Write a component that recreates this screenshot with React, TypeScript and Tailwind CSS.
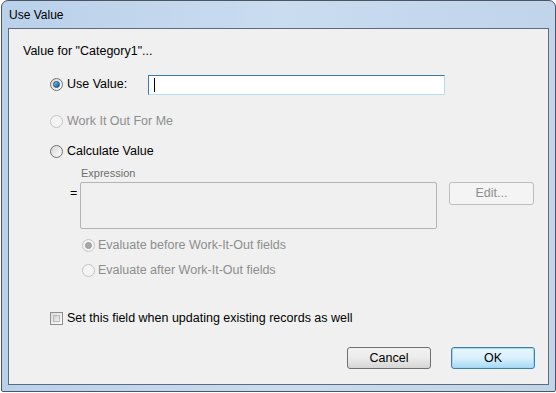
import React from 'react';

const font = { fontFamily: 'Tahoma, "Liberation Sans", Arial, sans-serif' };

const Radio = ({ checked = false, disabled = false }: { checked?: boolean; disabled?: boolean }) => (
  <span
    className={`relative inline-flex w-[13px] h-[13px] shrink-0 items-center justify-center rounded-full border ${
      disabled ? 'border-[#c4c4c4] bg-[#f4f4f4]' : 'border-[#6f6f6f] bg-gradient-to-br from-[#d6d6d6] to-[#fcfcfc]'
    }`}
  >
    {checked && (
      <span
        className={`w-[7px] h-[7px] rounded-full ${
          disabled ? 'bg-[#a8a8a8] border border-[#9a9a9a]' : 'bg-gradient-to-br from-[#7fd0f5] to-[#0d4f86] border border-[#1c4f7c]'
        }`}
      />
    )}
  </span>
);

const App = () => {
  return (
    <div className="w-[556px] h-[393px] bg-white text-[12.5px] text-black" style={font}>
      <div className="w-[555px] h-[392px] ml-px rounded-t-[7px] rounded-b-[2px] border border-[#4a5663] bg-gradient-to-r from-[#b9d1ea] via-[#c9dcf0] to-[#c0d4ea] flex flex-col px-[6px] pb-[6px]">
        {/* title bar */}
        <div className="h-[27px] flex items-center pl-[1px] pt-[1px] text-[12px] text-black" style={{ fontFamily: '"Segoe UI", "Liberation Sans", Arial, sans-serif' }}>
          Use Value
        </div>

        {/* client area */}
        <div className="flex-1 border border-[#5e6b7b] bg-[#f0f0f0] flex flex-col pl-[14px] pr-[13px]">
          <div className="mt-[15px] h-[14px] leading-[14px]">Value for "Category1"...</div>

          <div className="mt-[17px] flex items-center pl-[27px] h-[19px]">
            <Radio checked />
            <span className="ml-[4px] w-[80px]">Use Value:</span>
            <div className="ml-[1px] w-[297px] h-[20px] border border-[#3d7bad] border-b-[#b5dcf1] border-r-[#b5dcf1] bg-white flex items-center pl-[5px]">
              <span className="w-px h-[14px] bg-black" />
            </div>
          </div>

          <div className="mt-[20px] flex items-center pl-[27px] h-[14px] text-[#8d8d8d]">
            <Radio disabled />
            <span className="ml-[4px]">Work It Out For Me</span>
          </div>

          <div className="mt-[16px] flex items-center pl-[27px] h-[14px]">
            <Radio />
            <span className="ml-[4px]">Calculate Value</span>
          </div>

          <div className="mt-[8px] pl-[58px] h-[14px] leading-[14px] text-[11px] text-[#6d6d6d]">Expression</div>

          <div className="mt-[2px] flex items-start">
            <span className="ml-[47px] mt-[2px] w-[10px]">=</span>
            <div className="w-[357px] h-[47px] border border-[#b4b4b4] rounded-[2px] bg-[#f0f0f0]" />
            <div className="ml-[12px] w-[85px] h-[23px] border border-[#bdbdbd] rounded-[3px] bg-[#f4f4f4] flex items-center justify-center text-[#8d8d8d]">
              Edit...
            </div>
          </div>

          <div className="mt-[8px] flex items-center pl-[59px] h-[16px] text-[#8d8d8d]">
            <Radio checked disabled />
            <span className="ml-[3px]">Evaluate before Work-It-Out fields</span>
          </div>

          <div className="mt-[9px] flex items-center pl-[59px] h-[16px] text-[#8d8d8d]">
            <Radio disabled />
            <span className="ml-[3px]">Evaluate after Work-It-Out fields</span>
          </div>

          <div className="mt-[33px] flex items-center pl-[27px] h-[14px]">
            <span className="w-[13px] h-[13px] shrink-0 border border-[#8f8f8f] bg-gradient-to-br from-[#dcdcdc] to-[#fbfbfb] p-[2px]">
              <span className="block w-full h-full border border-[#b9b9b9] bg-gradient-to-br from-[#cfcfcf] to-[#f2f2f2]" />
            </span>
            <span className="ml-[4px]">Set this field when updating existing records as well</span>
          </div>

          <div className="mt-[22px] flex justify-end gap-[20px] pr-[0px]">
            <div className="w-[84px] h-[22px] border border-[#707070] rounded-[3px] bg-gradient-to-b from-[#f2f2f2] via-[#ebebeb] to-[#d5d5d5] flex items-center justify-center">
              Cancel
            </div>
            <div className="w-[84px] h-[22px] border border-[#3c7fb1] rounded-[3px] bg-gradient-to-b from-[#eaf6fd] via-[#d9f0fc] to-[#a7d9f5] shadow-[inset_0_0_0_1px_#9ed8f5] flex items-center justify-center">
              OK
            </div>
          </div>
        </div>
      </div>
    </div>
  );
};

export default App;
